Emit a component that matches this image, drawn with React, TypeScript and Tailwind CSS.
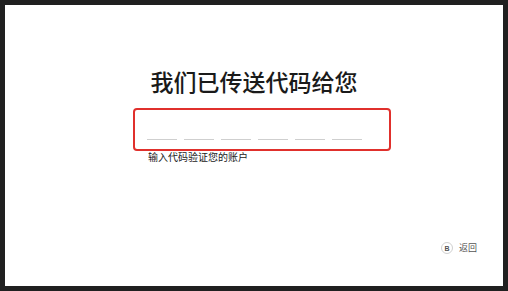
import React from 'react';

const CODE_SLOTS = 6;

export default function App() {
  return (
    <div className="w-[508px] h-[291px] bg-[#202020] pt-[5px] pb-[5px] px-[5px] font-['Noto_Sans_CJK_SC','Noto_Sans',sans-serif]">
      <div className="flex h-[281px] flex-col bg-white">
        <h1 className="mt-[61px] text-center text-[23px] leading-[30px] font-medium text-[#1a1a1a]">
          我们已传送代码给您
        </h1>

        <div className="mt-[12px] pl-[128px]">
          <div className="flex h-[43px] w-[258px] items-start gap-[7px] rounded-[4px] border-2 border-[#e0302c] pl-[12px] pt-[29px]">
            {Array.from({ length: CODE_SLOTS }).map((_, i) => (
              <span key={i} className="h-[1px] w-[30px] bg-[#cfcfcf]" />
            ))}
          </div>
          <p className="pl-[15px] text-[10px] leading-[12px] text-[#222]">输入代码验证您的账户</p>
        </div>

        <div className="mt-[79px] flex items-center justify-end gap-[6px] pr-[26px]">
          <span className="flex h-[12px] w-[12px] items-center justify-center rounded-full border border-[#d0d0d0] text-[7px] leading-none font-bold text-[#555] font-['Liberation_Sans',sans-serif]">
            B
          </span>
          <span className="text-[9px] leading-[12px] text-[#555]">返回</span>
        </div>
      </div>
    </div>
  );
}
